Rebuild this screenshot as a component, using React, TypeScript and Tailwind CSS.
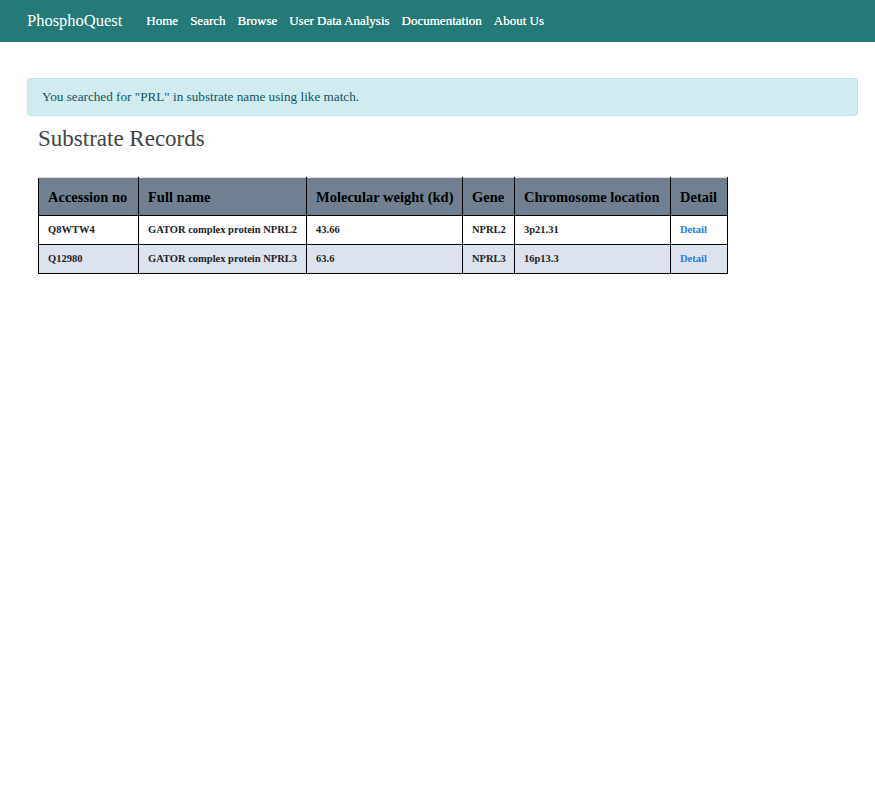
const rows = [
  { acc: 'Q8WTW4', name: 'GATOR complex protein NPRL2', mw: '43.66', gene: 'NPRL2', loc: '3p21.31' },
  { acc: 'Q12980', name: 'GATOR complex protein NPRL3', mw: '63.6', gene: 'NPRL3', loc: '16p13.3' },
];

const links = ['Home', 'Search', 'Browse', 'User Data Analysis', 'Documentation', 'About Us'];

const th = 'border-x border-black border-t border-t-[#ddd] pl-[9px] pt-[3px] font-bold whitespace-nowrap';
const td = 'border border-black pl-[9px] whitespace-nowrap';

export default function App() {
  return (
    <div className="min-h-[809px] bg-white font-['Liberation_Serif',Georgia,serif] text-[#212529]">
      <nav className="flex h-[42px] items-center bg-[#237a78] pl-[27px]">
        <span className="mr-[24px] text-[16.5px] text-white">PhosphoQuest</span>
        <ul className="flex gap-[12px]">
          {links.map((l) => (
            <li key={l} className="whitespace-nowrap text-[13px] text-white [text-shadow:0_0_0.4px_white]">{l}</li>
          ))}
        </ul>
      </nav>

      <main className="pl-[27px] pr-[17px] pt-[36px]">
        <div className="rounded-[3px] border border-[#bee5eb] bg-[#d1ecf1] px-[14px] py-[8px] text-[13.2px] text-[#0c5460]">
          You searched for "PRL" in substrate name using like match.
        </div>

        <div className="px-[11px]">
          <h2 className="mt-[6px] text-[23px] text-[#444]">Substrate Records</h2>

          <table className="mt-[21px] border-collapse">
            <thead>
              <tr className="h-[38px] bg-[#708090] text-left text-[14.5px] text-black">
                <th className={`w-[100px] ${th}`}>Accession no</th>
                <th className={`w-[168px] ${th}`}>Full name</th>
                <th className={`w-[156px] ${th}`}>Molecular weight (kd)</th>
                <th className={`w-[52px] ${th}`}>Gene</th>
                <th className={`w-[156px] ${th}`}>Chromosome location</th>
                <th className={`w-[57px] ${th}`}>Detail</th>
              </tr>
            </thead>
            <tbody>
              {rows.map((r, i) => (
                <tr key={r.acc} className={`h-[29px] text-[10.5px] font-bold text-[#222] ${i % 2 ? 'bg-[#dce3ee]' : 'bg-white'}`}>
                  <td className={td}>{r.acc}</td>
                  <td className={td}>{r.name}</td>
                  <td className={td}>{r.mw}</td>
                  <td className={td}>{r.gene}</td>
                  <td className={td}>{r.loc}</td>
                  <td className={`${td} text-[#1a7cf0]`}>Detail</td>
                </tr>
              ))}
            </tbody>
          </table>
        </div>
      </main>
    </div>
  );
}
